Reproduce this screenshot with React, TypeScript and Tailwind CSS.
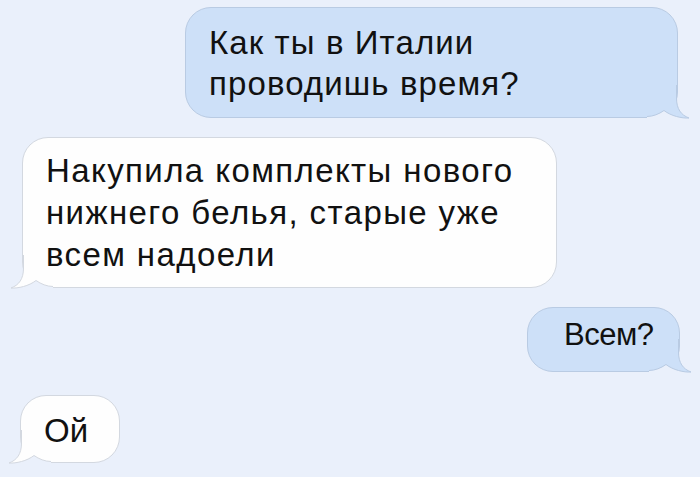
import React from "react";

const BG = "#eaf0fb";

function Tail({ side, fill, stroke }: { side: "left" | "right"; fill: string; stroke: string }) {
  const cls =
    side === "right"
      ? "absolute right-[-13px] bottom-[-4px]"
      : "absolute left-[-13px] bottom-[-4px] -scale-x-100";
  return (
    <svg width="52" height="44" viewBox="0 0 52 44" className={cls}>
      <path d="M 9 40.5 L 9 39.5 C 15 39.5 21 37 26 33.5 C 33 39 44 41.5 51 41 L 51 44 L 9 44 Z" fill={BG} />
      <path
        d="M 38.5 8 L 38.5 21 C 38.5 32 43 38 51 41 C 44 41.5 33 39 26 33.5 C 21 37 15 39.5 9 39.5 L 9 36.5 L 13 36.5 A 22.5 22.5 0 0 0 35.5 14 L 35.5 8 Z"
        fill={fill}
      />
      <path
        d="M 38.5 8 L 38.5 21 C 38.5 32 43 38 51 41 C 44 41.5 33 39 26 33.5 C 21 37 15 39.5 9 39.5"
        fill="none"
        stroke={stroke}
        strokeWidth="1"
      />
    </svg>
  );
}

const BLUE = "#cde0f8";
const BLUE_B = "#b9cbe3";
const WHITE = "#fefefe";
const WHITE_B = "#d3d8e0";

export default function App() {
  return (
    <div
      className="w-[700px] h-[477px] bg-[#eaf0fb] overflow-hidden flex flex-col pt-[7px] text-[33px] text-[#111]"
      style={{ fontFamily: '"Liberation Sans", Arial, sans-serif' }}
    >
      <div className="relative self-end mr-[22px] w-[493px] h-[111px] rounded-[26px] bg-[#cde0f8] border border-[#b9cbe3] pl-[23px] pt-[14px] leading-[41px] tracking-[1.1px]">
        <div className="whitespace-nowrap">Как ты в Италии</div>
        <div className="whitespace-nowrap">проводишь время?</div>
        <Tail side="right" fill={BLUE} stroke={BLUE_B} />
      </div>

      <div className="relative mt-[19px] ml-[22px] w-[535px] h-[151px] rounded-[26px] bg-[#fefefe] border border-[#d3d8e0] pl-[23px] pt-[12px] leading-[42px] tracking-[1.4px]">
        <div className="whitespace-nowrap">Накупила комплекты нового</div>
        <div className="whitespace-nowrap">нижнего белья, старые уже</div>
        <div className="whitespace-nowrap">всем надоели</div>
        <Tail side="left" fill={WHITE} stroke={WHITE_B} />
      </div>

      <div className="relative mt-[19px] self-end mr-[20px] w-[153px] h-[65px] rounded-[26px] bg-[#cde0f8] border border-[#b9cbe3] pl-[36px] pt-[6px] text-[31px] leading-[42px] tracking-[-0.5px]">
        <div className="whitespace-nowrap">Всем?</div>
        <Tail side="right" fill={BLUE} stroke={BLUE_B} />
      </div>

      <div className="relative mt-[23px] ml-[20px] w-[100px] h-[68px] rounded-[26px] bg-[#fefefe] border border-[#d3d8e0] pl-[23px] pt-[14px] leading-[42px]">
        <div className="whitespace-nowrap">Ой</div>
        <Tail side="left" fill={WHITE} stroke={WHITE_B} />
      </div>
    </div>
  );
}
